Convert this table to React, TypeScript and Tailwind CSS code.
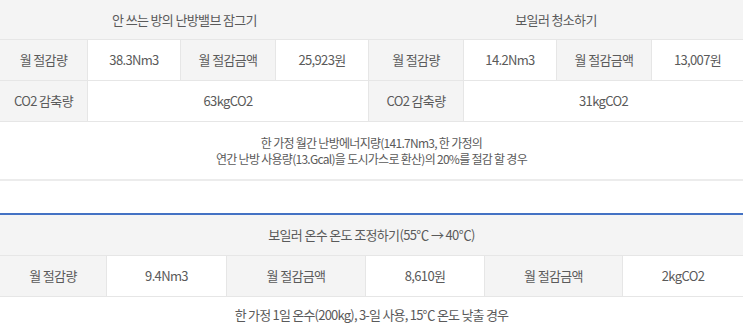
import React from "react";

const font = { fontFamily: '"Noto Sans CJK KR", "Noto Sans", sans-serif' };

type Cell = { text: string; label?: boolean; span?: number };

function Row({ cells, cols, last }: { cells: Cell[]; cols: string; last?: boolean }) {
  return (
    <div className={`grid ${cols}`}>
      {cells.map((c, i) => (
        <div
          key={i}
          className={`flex h-[41px] items-center justify-center border-b border-[#e6e6e6] text-[13px] tracking-[-0.05em] text-[#5a5a5a] ${
            c.label ? "bg-[#f4f4f4]" : "bg-white"
          } ${i === cells.length - 1 && last ? "" : "border-r"} ${c.span === 3 ? "col-span-3" : ""}`}
        >
          {c.text}
        </div>
      ))}
    </div>
  );
}

function TopTable({
  title,
  cols,
  amount,
  money,
  co2,
  last,
}: {
  title: string;
  cols: string;
  amount: string;
  money: string;
  co2: string;
  last?: boolean;
}) {
  return (
    <div className="flex flex-col">
      <div className="flex h-[40px] items-center justify-center border-b border-[#e6e6e6] bg-[#f4f4f4] text-[13px] tracking-[-0.05em] text-[#5a5a5a]">
        {title}
      </div>
      <Row
        cols={cols}
        last={last}
        cells={[
          { text: "월 절감량", label: true },
          { text: amount },
          { text: "월 절감금액", label: true },
          { text: money },
        ]}
      />
      <Row
        cols={cols}
        last={last}
        cells={[{ text: "CO2 감축량", label: true }, { text: co2, span: 3 }]}
      />
    </div>
  );
}

export default function App() {
  return (
    <div className="w-[743px] bg-white" style={font}>
      <div className="grid grid-cols-[369px_374px]">
        <TopTable
          title="안 쓰는 방의 난방밸브 잠그기"
          cols="grid-cols-[88px_93px_95px_93px]"
          amount="38.3Nm3"
          money="25,923원"
          co2="63kgCO2"
        />
        <TopTable
          title="보일러 청소하기"
          cols="grid-cols-[95px_93px_95px_91px]"
          amount="14.2Nm3"
          money="13,007원"
          co2="31kgCO2"
          last
        />
      </div>
      <div className="flex h-[59px] flex-col items-center justify-center border-b-2 border-[#ececec] text-[12px] leading-[16px] tracking-[-0.06em] text-[#5a5a5a]">
        <p>한 가정 월간 난방에너지량(141.7Nm3, 한 가정의</p>
        <p>연간 난방 사용량(13.Gcal)을 도시가스로 환산)의 20%를 절감 할 경우</p>
      </div>
      <div className="h-[32px]" />
      <div className="border-t-2 border-[#4472c4]">
        <div className="flex h-[41px] items-center justify-center border-b border-[#e6e6e6] bg-[#f4f4f4] text-[13px] tracking-[-0.05em] text-[#5a5a5a]">
          보일러 온수 온도 조정하기(55℃ → 40℃)
        </div>
        <Row
          cols="grid-cols-[107px_120px_139px_119px_138px_120px]"
          last
          cells={[
            { text: "월 절감량", label: true },
            { text: "9.4Nm3" },
            { text: "월 절감금액", label: true },
            { text: "8,610원" },
            { text: "월 절감금액", label: true },
            { text: "2kgCO2" },
          ]}
        />
        <div className="flex h-[36px] items-center justify-center text-[13px] tracking-[-0.06em] text-[#5a5a5a]">
          한 가정 1일 온수(200kg), 3-일 사용, 15℃ 온도 낮출 경우
        </div>
      </div>
    </div>
  );
}
